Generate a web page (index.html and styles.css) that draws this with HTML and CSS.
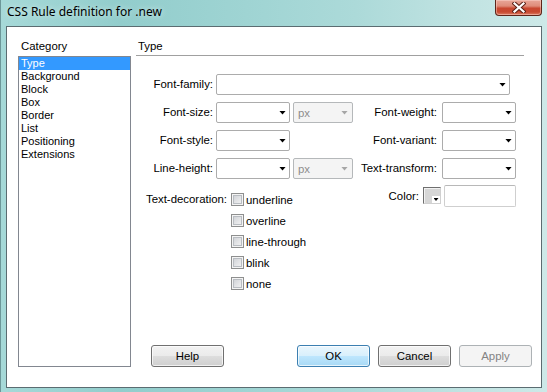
FILE: index.html
```html
<!DOCTYPE html>
<html>
<head>
<meta charset="utf-8">
<link rel="stylesheet" href="styles.css">
</head>
<body>
<div class="window">
  <div class="titlebar">
    <span class="title">CSS Rule definition for .new</span>
    <div class="close">
      <svg width="14" height="11" viewBox="0 0 14 11"><path d="M2.5 1.5 L11.5 9.5 M11.5 1.5 L2.5 9.5" stroke="#5a2016" stroke-width="4.2" stroke-linecap="square"/><path d="M2.5 1.5 L11.5 9.5 M11.5 1.5 L2.5 9.5" stroke="#ffffff" stroke-width="2.2" stroke-linecap="square"/></svg>
    </div>
  </div>
  <div class="client">
    <div class="cat">
      <div class="cat-label">Category</div>
      <ul class="listbox">
        <li class="sel">Type</li>
        <li>Background</li>
        <li>Block</li>
        <li>Box</li>
        <li>Border</li>
        <li>List</li>
        <li>Positioning</li>
        <li>Extensions</li>
      </ul>
    </div>
    <div class="panel">
      <div class="panel-head">Type</div>
      <div class="grid">
        <span class="lbl">Font-family:</span>
        <div class="combo wide"><span class="arrow"></span></div>

        <span class="lbl">Font-size:</span>
        <div class="combo"><span class="arrow"></span></div>
        <div class="combo dis"><span>px</span><span class="arrow"></span></div>
        <span class="lbl lbl2">Font-weight:</span>
        <div class="combo"><span class="arrow"></span></div>

        <span class="lbl">Font-style:</span>
        <div class="combo"><span class="arrow"></span></div>
        <span></span>
        <span class="lbl lbl2">Font-variant:</span>
        <div class="combo"><span class="arrow"></span></div>

        <span class="lbl">Line-height:</span>
        <div class="combo"><span class="arrow"></span></div>
        <div class="combo dis"><span>px</span><span class="arrow"></span></div>
        <span class="lbl lbl2">Text-transform:</span>
        <div class="combo"><span class="arrow"></span></div>
      </div>
      <div class="lower">
        <div class="deco">
          <span class="deco-label">Text-decoration:</span>
          <label class="chk"><span class="box"></span>underline</label>
          <label class="chk"><span class="box"></span>overline</label>
          <label class="chk"><span class="box"></span>line-through</label>
          <label class="chk"><span class="box"></span>blink</label>
          <label class="chk"><span class="box"></span>none</label>
        </div>
        <div class="color">
          <span class="color-label">Color:</span>
          <div class="swatch"><span class="swatch-drop"><span class="arrow"></span></span></div>
          <div class="textbox"></div>
        </div>
      </div>
      <div class="buttons">
        <div class="btn help">Help</div>
        <div class="btn ok">OK</div>
        <div class="btn">Cancel</div>
        <div class="btn apply">Apply</div>
      </div>
    </div>
  </div>
</div>
</body>
</html>
```
FILE: styles.css
```css
* { box-sizing: border-box; margin: 0; padding: 0; }
body {
  margin: 0;
  width: 547px;
  height: 392px;
  overflow: hidden;
  font-family: "Liberation Sans", Arial, sans-serif;
  color: #000;
}
.window {
  width: 547px;
  height: 392px;
  display: flex;
  flex-direction: column;
  border-left: 1px solid #6d9799;
  background: linear-gradient(90deg, #a6d9d8 0%, #92cdcc 22%, #9fd4d3 45%, #acdad9 65%, #c1e3e2 85%, #cde9e8 100%);
}
.titlebar {
  height: 26px;
  display: flex;
  align-items: flex-start;
}
.title {
  font-family: "Noto Sans", "Open Sans", sans-serif;
  font-size: 12px;
  line-height: 16px;
  padding: 4px 0 0 6px;
  color: #000;
  text-shadow: 0 0 6px rgba(255,255,255,0.7);
}
.close {
  margin-left: auto;
  margin-right: 5px;
  width: 47px;
  height: 16px;
  border: 1px solid #5d2419;
  border-top: none;
  border-radius: 0 0 4px 4px;
  background: linear-gradient(#e8a698 0%, #df8c79 40%, #c9472f 55%, #c84a31 80%, #de7f66 100%);
  box-shadow: inset 0 0 0 1px rgba(255,220,210,0.45);
  display: flex;
  align-items: center;
  justify-content: center;
}
.client {
  flex: 1;
  margin: 0 5px 4px 5px;
  background: #fff;
  border: 1px solid #5b6c71;
  display: flex;
  padding: 13px 9px 20px 11px;
}
.cat {
  width: 113px;
  display: flex;
  flex-direction: column;
}
.cat-label {
  font-size: 11.4px;
  line-height: 13px;
  padding-left: 3px;
  margin-bottom: 3px;
}
.listbox {
  flex: 1;
  list-style: none;
  border: 1px solid #828790;
}
.listbox li {
  font-size: 11px;
  line-height: 13px;
  padding-left: 2px;
}
.listbox li.sel {
  background: #3399ff;
  color: #fff;
}
.panel {
  flex: 1;
  margin-left: 5px;
  display: flex;
  flex-direction: column;
}
.panel-head {
  width: 388px;
  font-size: 11.4px;
  line-height: 13px;
  padding: 0 0 2px 2px;
  border-bottom: 1px solid #a0a0a0;
}
.grid {
  margin-top: 18px;
  display: grid;
  grid-template-columns: 80px 74px 63px 89px 74px;
  grid-auto-rows: 21px;
  row-gap: 7px;
}
.lbl {
  font-size: 11.4px;
  line-height: 21px;
  text-align: right;
  padding-right: 3px;
  white-space: nowrap;
}
.lbl2 { padding-right: 5px; }
.combo {
  height: 21px;
  border: 1px solid #acacac;
  border-radius: 2px;
  background: #fff;
  display: flex;
  align-items: center;
  justify-content: flex-end;
  padding-right: 3px;
}
.combo.wide {
  grid-column: 2 / 6;
  width: 294px;
}
.combo.dis {
  margin-left: 3px;
  width: 60px;
  background: #f4f4f4;
  border-color: #b5b8ba;
  justify-content: space-between;
  padding-left: 4px;
  padding-right: 4px;
  color: #8d8d8d;
  font-size: 11.4px;
}
.arrow {
  width: 7px;
  height: 4px;
  background: #000;
  clip-path: polygon(0 0, 100% 0, 50% 100%);
}
.combo.dis .arrow { background: #a6a6a6; }
.lower {
  margin-top: 6px;
  display: flex;
  align-items: flex-start;
}
.deco {
  margin-top: 4px;
  display: grid;
  grid-template-columns: 95px auto;
  grid-auto-rows: 21px;
}
.deco-label {
  grid-row: 1;
  grid-column: 1;
  font-size: 11.4px;
  line-height: 21px;
  text-align: right;
  padding-right: 4px;
  white-space: nowrap;
}
.chk {
  grid-column: 2;
  display: flex;
  align-items: center;
  font-size: 11.4px;
  white-space: nowrap;
}
.box {
  width: 13px;
  height: 13px;
  margin-right: 2px;
  border: 1px solid #8e8f8f;
  background: linear-gradient(135deg, #c9ccd1 0%, #e6e7e9 60%, #f6f6f6 100%);
  box-shadow: inset 0 0 0 1px #f4f4f4, inset 0 0 0 2px #b9bdc2;
}
.color {
  margin-left: auto;
  margin-right: 16px;
  display: flex;
  align-items: flex-start;
}
.color-label {
  font-size: 11.4px;
  line-height: 22px;
  margin-right: 4px;
}
.swatch {
  margin-top: 2px;
  margin-right: 3px;
  width: 18px;
  height: 17px;
  border: 1px solid #6f6f6f;
  border-right-color: #d0d0d0;
  border-bottom-color: #d0d0d0;
  background: #d6d6d6;
  box-shadow: inset 1px 1px 0 #f2f2f2;
  display: flex;
  align-items: flex-end;
  justify-content: flex-end;
}
.swatch-drop {
  width: 8px;
  height: 7px;
  background: #fff;
  display: flex;
  align-items: center;
  justify-content: center;
}
.swatch-drop .arrow {
  width: 5px;
  height: 3px;
}
.textbox {
  width: 72px;
  height: 22px;
  border: 1px solid #cfcfcf;
  border-top-color: #b8b8b8;
  border-radius: 2px;
  background: #fff;
}
.buttons {
  margin-top: auto;
  display: flex;
  gap: 8px;
}
.btn {
  width: 73px;
  height: 22px;
  border: 1px solid #707070;
  border-radius: 3px;
  background: linear-gradient(#f2f2f2 0%, #ebebeb 48%, #dddddd 52%, #cfcfcf 100%);
  box-shadow: inset 0 0 0 1px rgba(255,255,255,0.7);
  font-size: 11.4px;
  line-height: 20px;
  text-align: center;
}
.btn.help {
  margin-left: 15px;
  margin-right: auto;
}
.btn.ok {
  border-color: #3c7fb1;
  background: linear-gradient(#eaf6fd 0%, #d9f0fc 48%, #bee6fd 52%, #a7d9f5 100%);
}
.btn.apply {
  border-color: #adb2b5;
  background: #f4f4f4;
  box-shadow: none;
  color: #838383;
}
```
